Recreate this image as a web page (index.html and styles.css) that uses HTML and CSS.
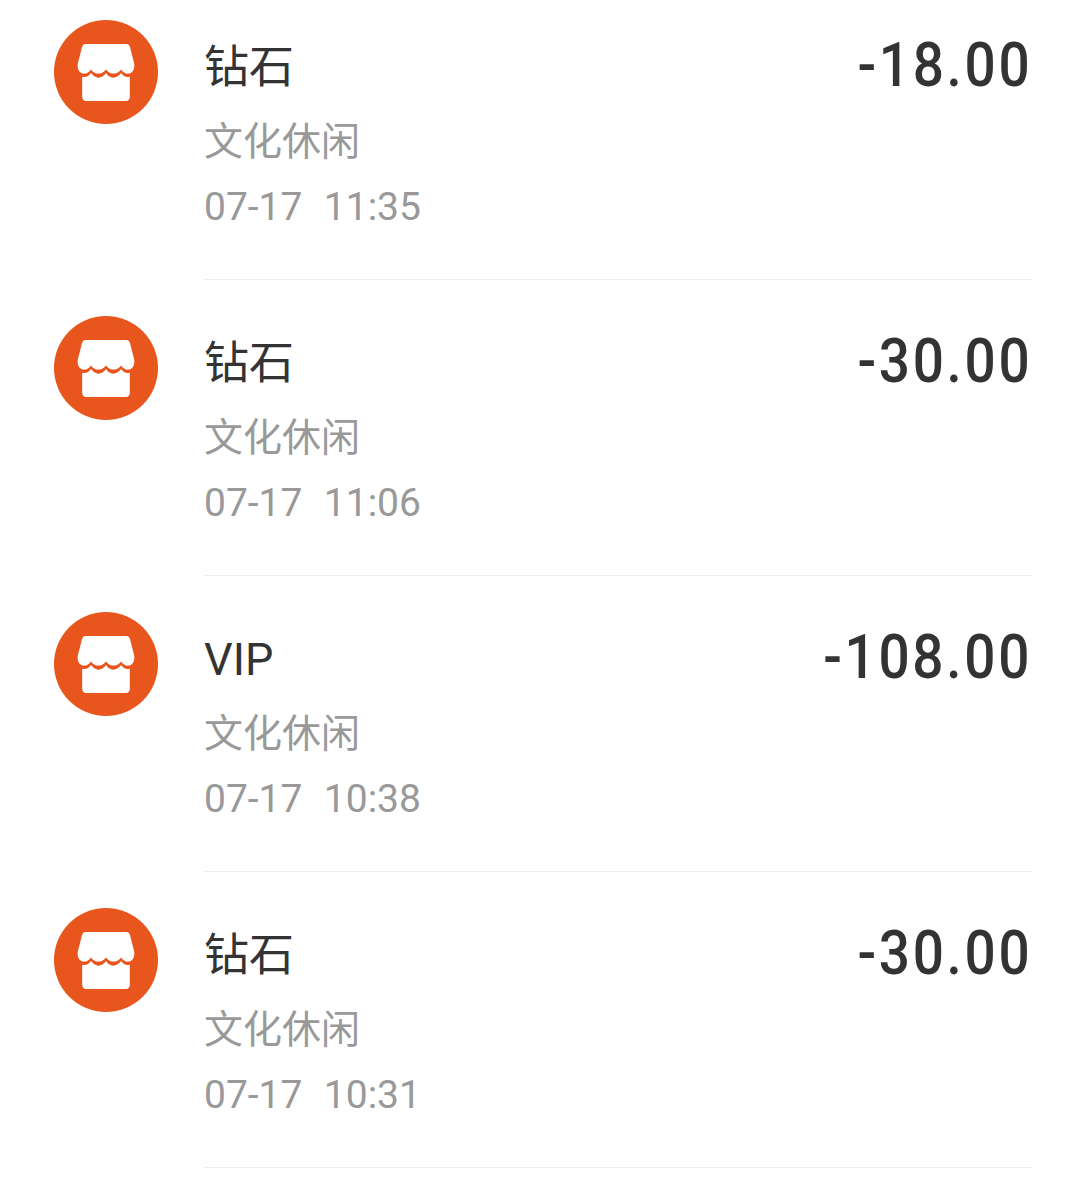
FILE: index.html
```html
<!DOCTYPE html>
<html lang="zh">
<head>
<meta charset="utf-8">
<title>账单</title>
<link rel="stylesheet" href="styles.css">
</head>
<body>
<svg class="defs" width="0" height="0" aria-hidden="true">
  <symbol id="shop" viewBox="0 0 56 56">
    <path fill="#fff" d="M8.500 1H47.500C49.500 1 50.500 2 51.200 4L55.300 20C55.800 26 53.500 29.500 49 29.500Q45 29.500 42.500 25.500Q40 29.500 35.200 29.500Q31 29.500 28 25.500Q25 29.500 20.800 29.500Q16 29.500 13.500 25.500Q11 29.500 7 29.500C2.500 29.500 .2 26 .7 20L4.800 4C5.500 2 6.500 1 8.500 1Z"/>
    <path fill="#fff" d="M5 32.500Q10 34 13.500 29Q17 33.500 20.800 33.500Q25 33.500 28 29Q31 33.500 35.200 33.500Q39 33.500 42.500 29Q46 34 51 32.500V52Q51 56 47 56H9Q5 56 5 52Z"/>
  </symbol>
</svg>
<main class="list">
  <article class="row">
    <span class="badge"><svg class="shop"><use href="#shop"/></svg></span>
    <div class="body">
      <div class="info">
        <div class="name">钻石</div>
        <div class="cat">文化休闲</div>
        <div class="time">07-17&nbsp;&nbsp;11:35</div>
      </div>
      <div class="amount">-18.00</div>
    </div>
  </article>
  <article class="row">
    <span class="badge"><svg class="shop"><use href="#shop"/></svg></span>
    <div class="body">
      <div class="info">
        <div class="name">钻石</div>
        <div class="cat">文化休闲</div>
        <div class="time">07-17&nbsp;&nbsp;11:06</div>
      </div>
      <div class="amount">-30.00</div>
    </div>
  </article>
  <article class="row">
    <span class="badge"><svg class="shop"><use href="#shop"/></svg></span>
    <div class="body">
      <div class="info">
        <div class="name">VIP</div>
        <div class="cat">文化休闲</div>
        <div class="time">07-17&nbsp;&nbsp;10:38</div>
      </div>
      <div class="amount">-108.00</div>
    </div>
  </article>
  <article class="row">
    <span class="badge"><svg class="shop"><use href="#shop"/></svg></span>
    <div class="body">
      <div class="info">
        <div class="name">钻石</div>
        <div class="cat">文化休闲</div>
        <div class="time">07-17&nbsp;&nbsp;10:31</div>
      </div>
      <div class="amount">-30.00</div>
    </div>
  </article>
</main>
</body>
</html>
```
FILE: styles.css
```css
html, body {
  margin: 0;
  background: #fff;
  overflow: hidden;
}
.defs {
  display: block;
  height: 0;
}
.list {
  display: flex;
  flex-direction: column;
  gap: 36px;
  padding: 20px 48px 0 54px;
}
.row {
  display: flex;
  gap: 46px;
}
.badge {
  flex: none;
  width: 104px;
  height: 104px;
  border-radius: 50%;
  background: #e8561e;
  display: flex;
  align-items: center;
  justify-content: center;
}
.shop {
  width: 58px;
  height: 58px;
}
.body {
  flex: 1;
  height: 260px;
  box-sizing: border-box;
  border-bottom: 1px solid #eeeeee;
  display: flex;
  justify-content: space-between;
  align-items: flex-start;
}
.info {
  display: flex;
  flex-direction: column;
  padding: 18px 0 0;
}
.name {
  font: 45px/60px "Roboto", "Noto Sans CJK SC", sans-serif;
  color: #333;
}
.cat {
  font: 39px/56px "Roboto", "Noto Sans CJK SC", sans-serif;
  color: #999;
  margin-top: 16px;
}
.time {
  font: 39px/56px "Roboto", "Noto Sans CJK SC", sans-serif;
  color: #999;
  word-spacing: 1px;
  margin-top: 9px;
}
.amount {
  font: 500 61px/70px "Roboto", sans-serif;
  color: #333;
  letter-spacing: 3px;
  transform: scaleX(.9);
  transform-origin: right center;
  margin: 10px 0 0;
}
```
